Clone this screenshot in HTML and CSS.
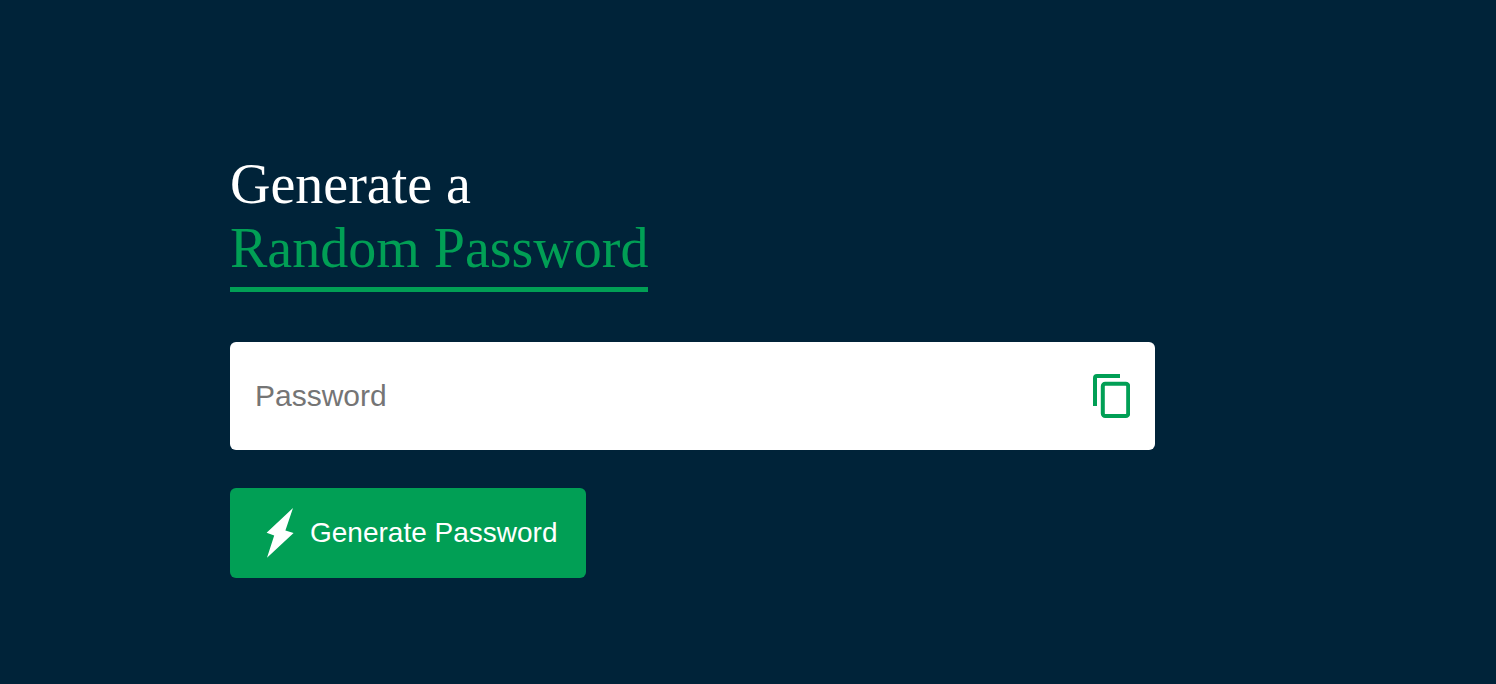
FILE: index.html
```html
<!DOCTYPE html>
<html lang="en">
<head>
<meta charset="utf-8">
<meta name="viewport" content="width=device-width, initial-scale=1">
<title>Random Password Generator</title>
<link rel="stylesheet" href="styles.css">
</head>
<body>
<main class="container">
  <h1 class="title">Generate a<br><span class="title-accent">Random Password</span></h1>
  <div class="display">
    <input class="display-input" type="text" placeholder="Password" aria-label="Password">
    <button class="copy" type="button" aria-label="Copy password">
      <svg class="copy-icon" viewBox="0 0 37 44" aria-hidden="true">
        <path d="M2 32V4a2 2 0 0 1 2-2h23" />
        <rect x="9.8" y="9.8" width="25.4" height="32.2" rx="2.4" />
      </svg>
    </button>
  </div>
  <button class="generate" type="button">
    <svg class="bolt-icon" viewBox="0 0 28 50" aria-hidden="true">
      <path d="M27 0 .6 24.8l7.6 2.8L1 49.8 27.6 25l-8.2-2.6z" />
    </svg>
    Generate Password
  </button>
</main>
</body>
</html>
```
FILE: styles.css
```css
* {
  box-sizing: border-box;
  margin: 0;
  padding: 0;
}

body {
  background: #002339;
  color: #fff;
  font-family: "Liberation Sans", Arial, sans-serif;
}

.container {
  width: 90%;
  max-width: 1036px;
  margin: 0 auto;
  padding: 152px 0 40px;
}

.title {
  font: 400 56px/64px "Liberation Serif", "Times New Roman", serif;
}

.title-accent {
  display: inline-block;
  padding-bottom: 7px;
  border-bottom: 5px solid #019f55;
  color: #019f55;
}

.display {
  display: flex;
  align-items: center;
  max-width: 925px;
  margin: 50px 0 38px;
  padding: 26px 25px;
  border-radius: 6px;
  background: #fff;
}

.display-input {
  flex: 1;
  min-width: 0;
  height: 56px;
  border: 0;
  outline: 0;
  background: none;
  color: #333;
  font: 30px "Liberation Sans", Arial, sans-serif;
}

.display-input::placeholder {
  color: #757575;
}

.copy {
  display: flex;
  border: 0;
  background: none;
  cursor: pointer;
}

.copy-icon {
  width: 37px;
  height: 44px;
  fill: none;
  stroke: #019f55;
  stroke-width: 4;
}

.generate {
  display: flex;
  align-items: center;
  gap: 16px;
  height: 90px;
  padding: 0 29px 0 36px;
  border: 0;
  border-radius: 6px;
  background: #019f55;
  color: #fff;
  font: 28px "Liberation Sans", Arial, sans-serif;
  cursor: pointer;
}

.bolt-icon {
  width: 28px;
  height: 50px;
  fill: #fff;
}
```
